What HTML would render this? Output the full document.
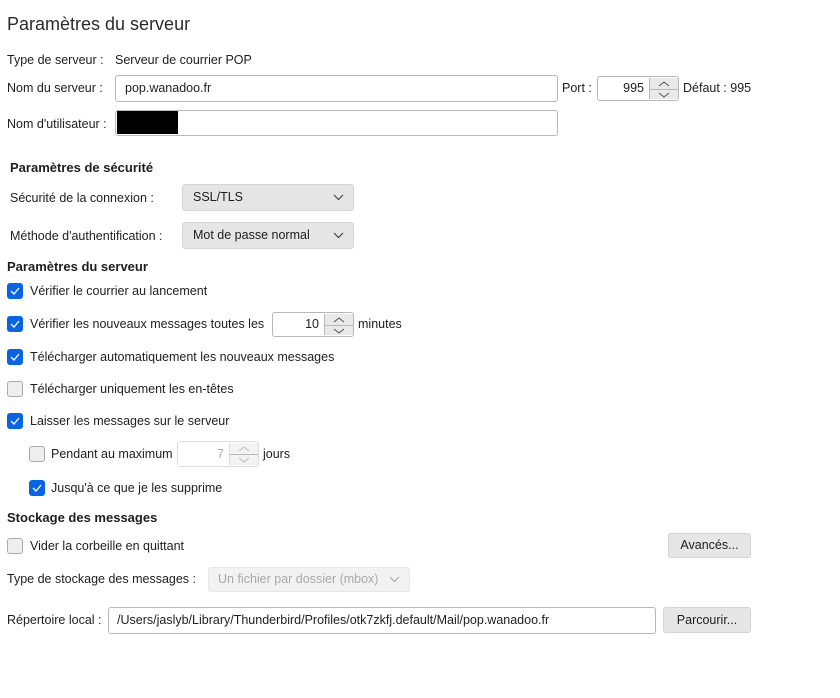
<!DOCTYPE html>
<html><head><meta charset="utf-8"><style>
body{margin:0;width:840px;height:698px;background:#fff;font-family:"Liberation Sans",sans-serif;font-size:12.5px;color:#1e1e1e;position:relative;overflow:hidden}
.a{position:absolute;white-space:nowrap;line-height:16px}
.b{font-weight:bold;font-size:13px}
.in{position:absolute;border:1px solid #b8b8b8;border-radius:3px;background:#fff;box-sizing:border-box;line-height:24px;padding-left:9px;white-space:nowrap}
.sel{position:absolute;background:#e5e5e5;border:1px solid #d6d6d6;border-radius:3px;box-sizing:border-box;line-height:24px;padding-left:10px}
.sel svg{position:absolute;right:9px;top:9px}
.cb{position:absolute;width:16px;height:16px;border-radius:3px;box-sizing:border-box}
.on{background:#0a64e1}
.off{background:#eee;border:1px solid #aaa}
.spin{position:absolute;border:1px solid #b8b8b8;border-radius:3px;box-sizing:border-box;background:#fff}
.spin .v{position:absolute;right:34px;top:0;line-height:22px}
.spin .ar{position:absolute;right:0;top:1px;width:28px;bottom:1px;border-left:1px solid #b8b8b8;background:#e9e9e9}
.spin .ar:after{content:"";position:absolute;left:0;right:0;top:50%;border-top:1px solid #b8b8b8}
.btn{position:absolute;background:#e6e6e6;border:1px solid #d4d4d4;border-radius:3px;box-sizing:border-box;text-align:center;line-height:22px}
</style></head><body>
<div class="a" style="left:7px;top:13px;font-size:18px;line-height:22px;color:#2a2a2a">Paramètres du serveur</div>
<div class="a" style="left:7px;top:52px">Type de serveur :</div>
<div class="a" style="left:115px;top:52px">Serveur de courrier POP</div>
<div class="a" style="left:7px;top:80px">Nom du serveur :</div>
<div class="in" style="left:115px;top:75px;width:443px;height:27px">pop.wanadoo.fr</div>
<div class="a" style="left:562px;top:80px">Port :</div>
<div class="spin" style="left:597px;top:76px;width:82px;height:25px"><span class="v">995</span><div class="ar"><svg width="28" height="23" style="position:absolute;left:0;top:0"><path d="M9 8l5-4 5 4M9 15l5 4 5-4" fill="none" stroke="#555" stroke-width="1"/></svg></div></div>
<div class="a" style="left:683px;top:80px">Défaut : 995</div>
<div class="a" style="left:7px;top:116px">Nom d'utilisateur :</div>
<div class="in" style="left:115px;top:110px;width:443px;height:26px"></div>
<div style="position:absolute;left:117px;top:111px;width:61px;height:23px;background:#000"></div>
<div class="a b" style="left:10px;top:160px">Paramètres de sécurité</div>
<div class="a" style="left:10px;top:190px">Sécurité de la connexion :</div>
<div class="sel" style="left:182px;top:184px;width:172px;height:27px">SSL/TLS<svg width="11" height="7"><path d="M1 1l4.5 4.5L10 1" fill="none" stroke="#444" stroke-width="1.2"/></svg></div>
<div class="a" style="left:10px;top:228px">Méthode d'authentification :</div>
<div class="sel" style="left:182px;top:222px;width:172px;height:27px">Mot de passe normal<svg width="11" height="7"><path d="M1 1l4.5 4.5L10 1" fill="none" stroke="#444" stroke-width="1.2"/></svg></div>
<div class="a b" style="left:7px;top:259px">Paramètres du serveur</div>

<div class="cb on" style="left:7px;top:283px"><svg width="16" height="16"><path d="M4 8l3 3 5-6" fill="none" stroke="#fff" stroke-width="1.3"/></svg></div>
<div class="a" style="left:30px;top:283px">Vérifier le courrier au lancement</div>
<div class="cb on" style="left:7px;top:316px"><svg width="16" height="16"><path d="M4 8l3 3 5-6" fill="none" stroke="#fff" stroke-width="1.3"/></svg></div>
<div class="a" style="left:30px;top:316px">Vérifier les nouveaux messages toutes les</div>
<div class="spin" style="left:272px;top:312px;width:82px;height:25px"><span class="v">10</span><div class="ar"><svg width="28" height="23" style="position:absolute;left:0;top:0"><path d="M9 8l5-4 5 4M9 15l5 4 5-4" fill="none" stroke="#555" stroke-width="1"/></svg></div></div>
<div class="a" style="left:358px;top:316px">minutes</div>
<div class="cb on" style="left:7px;top:349px"><svg width="16" height="16"><path d="M4 8l3 3 5-6" fill="none" stroke="#fff" stroke-width="1.3"/></svg></div>
<div class="a" style="left:30px;top:349px">Télécharger automatiquement les nouveaux messages</div>
<div class="cb off" style="left:7px;top:381px"></div>
<div class="a" style="left:30px;top:381px">Télécharger uniquement les en-têtes</div>
<div class="cb on" style="left:7px;top:413px"><svg width="16" height="16"><path d="M4 8l3 3 5-6" fill="none" stroke="#fff" stroke-width="1.3"/></svg></div>
<div class="a" style="left:30px;top:413px">Laisser les messages sur le serveur</div>
<div class="cb off" style="left:29px;top:446px"></div>
<div class="a" style="left:51px;top:446px">Pendant au maximum</div>
<div class="spin" style="left:177px;top:441px;width:82px;height:26px;border-color:#ddd"><span class="v" style="color:#aaa;line-height:24px">7</span><div class="ar" style="background:#f3f3f3;border-color:#ddd"><svg width="28" height="23" style="position:absolute;left:0;top:0"><path d="M9 8l5-4 5 4M9 15l5 4 5-4" fill="none" stroke="#bbb" stroke-width="1"/></svg></div></div>
<div class="a" style="left:263px;top:446px">jours</div>
<div class="cb on" style="left:29px;top:480px"><svg width="16" height="16"><path d="M4 8l3 3 5-6" fill="none" stroke="#fff" stroke-width="1.3"/></svg></div>
<div class="a" style="left:51px;top:480px">Jusqu'à ce que je les supprime</div>

<div class="a b" style="left:7px;top:510px">Stockage des messages</div>
<div class="cb off" style="left:7px;top:538px"></div>
<div class="a" style="left:30px;top:538px">Vider la corbeille en quittant</div>
<div class="btn" style="left:668px;top:533px;width:83px;height:25px">Avancés...</div>
<div class="a" style="left:7px;top:571px">Type de stockage des messages :</div>
<div class="sel" style="left:208px;top:567px;width:202px;height:25px;background:#f2f2f2;border-color:#e6e6e6;color:#a8a8a8;line-height:23px;padding-left:9px">Un fichier par dossier (mbox)<svg width="11" height="7" style="top:8px"><path d="M1 1l4.5 4.5L10 1" fill="none" stroke="#aaa" stroke-width="1.2"/></svg></div>
<div class="a" style="left:7px;top:612px">Répertoire local :</div>
<div class="in" style="left:108px;top:607px;width:548px;height:27px;padding-left:8px">/Users/jaslyb/Library/Thunderbird/Profiles/otk7zkfj.default/Mail/pop.wanadoo.fr</div>
<div class="btn" style="left:663px;top:607px;width:88px;height:26px;line-height:24px">Parcourir...</div>
</body></html>
